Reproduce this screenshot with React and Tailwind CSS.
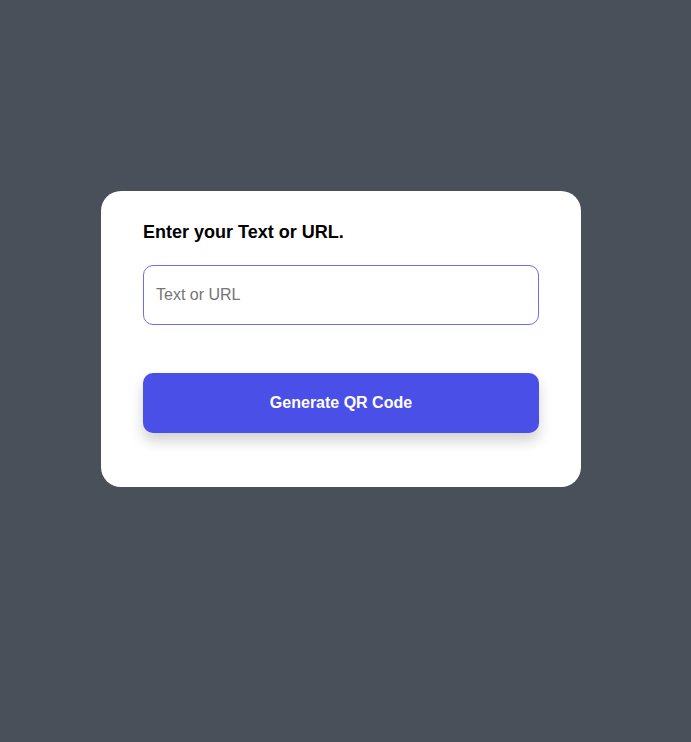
export default function App() {
  return (
    <div className="min-h-screen w-full bg-[#4a5059] pt-[191px] pl-[101px]" style={{ fontFamily: '"Liberation Sans", Arial, sans-serif' }}>
      <div className="w-[480px] h-[296px] bg-white rounded-[20px] px-[42px] pt-[31px]">
        <h2 className="text-[18px] leading-[20px] font-bold text-black">Enter your Text or URL.</h2>
        <input
          type="text"
          placeholder="Text or URL"
          className="mt-[23px] block w-full h-[60px] rounded-[10px] border border-[#6b6ff0] px-[12px] text-[16px] text-black placeholder:text-[#757575] outline-none"
        />
        <button className="mt-[48px] block w-full h-[60px] rounded-[10px] bg-[#4a4fe8] text-white text-[16px] font-bold shadow-[0_8px_14px_rgba(0,0,0,0.18)]">
          Generate QR Code
        </button>
      </div>
    </div>
  );
}
